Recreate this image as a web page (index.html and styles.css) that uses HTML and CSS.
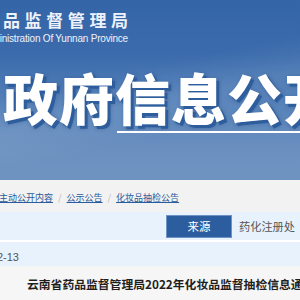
FILE: index.html
```html
<!DOCTYPE html>
<html lang="zh-CN">
<head>
  <meta charset="UTF-8">
  <meta name="viewport" content="width=device-width, initial-scale=1.0">
  <title>政府信息公开</title>
  <link rel="stylesheet" href="styles.css">
</head>
<body>

  <div class="banner">
    <div class="brand">
      <div class="brand-cn">云南省药品监督管理局</div>
      <div class="brand-en">Medical Products Administration Of Yunnan Province</div>
    </div>
    <h1 class="banner-title">政府信息公开</h1>
    <div class="banner-rule"></div>
  </div>

  <div class="crumbs">
    <a href="#" class="crumb crumb-first">主动公开内容</a>
    <span class="sep">/</span>
    <a href="#" class="crumb">公示公告</a>
    <span class="sep">/</span>
    <a href="#" class="crumb">化妆品抽检公告</a>
  </div>

  <div class="meta">
    <div class="meta-row">
      <div class="meta-label">来源</div>
      <div class="meta-value">药化注册处</div>
    </div>
    <div class="meta-row">
      <div class="meta-date"><span>发布日期：2022-12-13</span></div>
    </div>
  </div>

  <h2 class="article-title">云南省药品监督管理局2022年化妆品监督抽检信息通告</h2>

</body>
</html>
```

FILE: styles.css
```css
* {
  margin: 0;
  padding: 0;
  box-sizing: border-box;
}

body {
  font-family: "Noto Sans CJK SC", "Liberation Sans", sans-serif;
  background-color: #f6f6f6;
  width: 300px;
  overflow: hidden;
}

.banner {
  height: 180px;
  padding-top: 9px;
  background:
    linear-gradient(168deg, rgba(255, 255, 255, 0) 40%, rgba(255, 255, 255, 0.08) 55%, rgba(255, 255, 255, 0) 70%),
    linear-gradient(180deg, #3465a6 0%, #3b6bac 30%, #5783ba 60%, #6c91c0 85%, #6f93c1 100%);
  overflow: hidden;
}

.brand {
  width: 128px;
  display: flex;
  flex-direction: column;
  align-items: flex-end;
  white-space: nowrap;
}

.brand-cn {
  font-size: 17px;
  font-weight: bold;
  line-height: 22px;
  letter-spacing: 4.6px;
  margin-right: -4.6px;
  color: #eef2fb;
}

.brand-en {
  font-family: "Liberation Sans", sans-serif;
  font-size: 10px;
  line-height: 14px;
  letter-spacing: -0.2px;
  color: #eef2fb;
  margin-top: 1px;
}

.banner-title {
  margin-top: 20px;
  padding-left: 3px;
  font-size: 55px;
  font-weight: 900;
  line-height: 60px;
  letter-spacing: 1px;
  color: #fff;
  white-space: nowrap;
  text-shadow: 3px 3px 0 #2d5d9d, 2px 2px 4px rgba(20, 50, 100, 0.5);
}

.banner-rule {
  margin: 5px 0 0 117px;
  height: 2px;
  background: #fff;
}

.crumbs {
  height: 32px;
  background: #f2f2f2;
  display: flex;
  align-items: center;
  padding-top: 3px;
  font-size: 9px;
  white-space: nowrap;
}

.crumb {
  color: #2a5b9d;
  text-decoration: underline;
}

.crumb-first {
  margin-left: -1px;
}

.sep {
  color: #b8b8b8;
  margin: 0 5px;
}

.meta {
  display: flex;
  flex-direction: column;
  gap: 2px;
  background: #fff;
}

.meta-row {
  height: 28px;
  background: #e7f2fd;
  display: flex;
  align-items: center;
  font-size: 11.5px;
  color: #555;
}

.meta-row + .meta-row {
  height: 24px;
}

.meta-label {
  margin-left: 166px;
  width: 66px;
  height: 23px;
  background: #2c5e9f;
  border: 1px solid #6f93c4;
  color: #fff;
  display: flex;
  align-items: center;
  justify-content: center;
}

.meta-value {
  margin-left: 7px;
  font-size: 11.2px;
  white-space: nowrap;
}

.meta-date {
  width: 19px;
  display: flex;
  justify-content: flex-end;
  white-space: nowrap;
  font-family: "Liberation Sans", sans-serif;
  font-size: 11px;
  padding-top: 3px;
}

.article-title {
  margin-top: 9px;
  padding-left: 27px;
  font-size: 11.8px;
  font-weight: bold;
  color: #1e1e1e;
  white-space: nowrap;
  line-height: 18px;
}
```
